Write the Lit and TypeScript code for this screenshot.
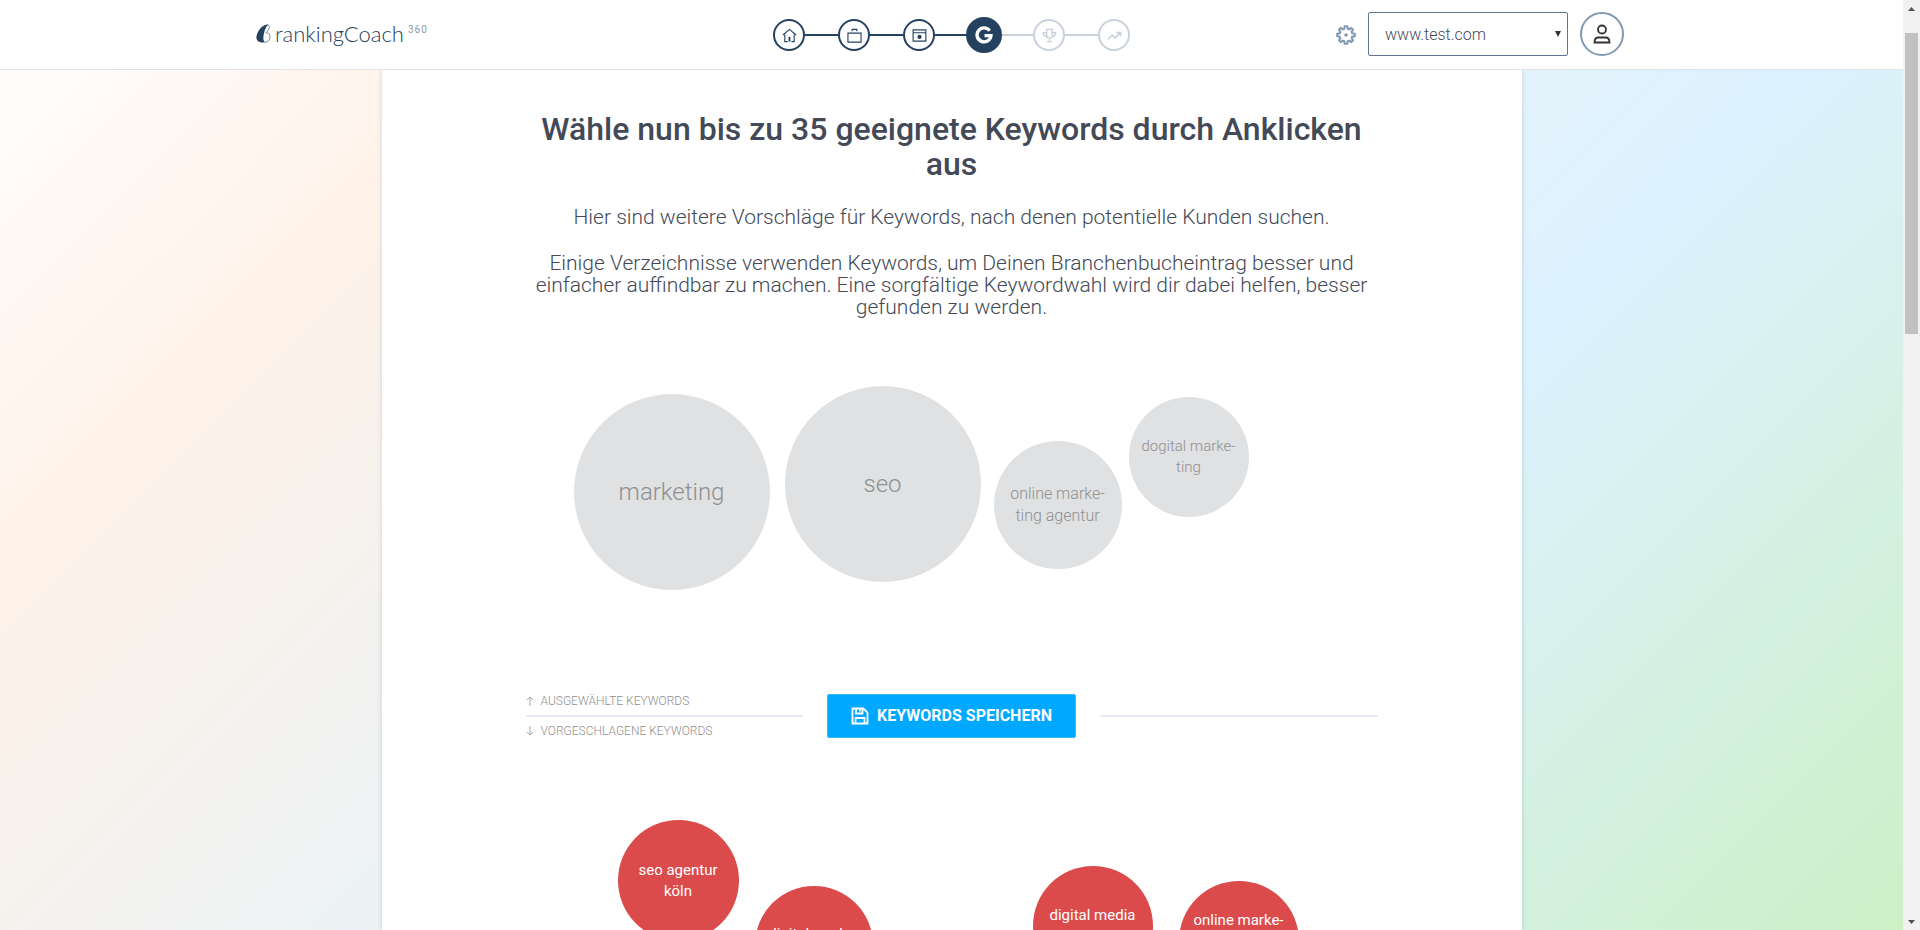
import { LitElement, html, css, svg } from "lit";
import { customElement } from "lit/decorators.js";
import { classMap } from "lit/directives/class-map.js";
import { styleMap } from "lit/directives/style-map.js";

interface Bubble {
  lines: string[];
  x: number;
  y: number;
  size: number;
}

const SELECTED: Bubble[] = [
  { lines: ["marketing"], x: 48, y: 52, size: 196 },
  { lines: ["seo"], x: 259, y: 44, size: 196 },
  { lines: ["online marke-", "ting agentur"], x: 468, y: 99, size: 128 },
  { lines: ["dogital marke-", "ting"], x: 603, y: 55, size: 120 },
];

const SUGGESTED: Bubble[] = [
  { lines: ["seo agentur", "köln"], x: 92, y: 82, size: 121 },
  { lines: ["digital marke-", "ting"], x: 229, y: 148, size: 118 },
  { lines: ["digital media", "agentur"], x: 507, y: 128, size: 120 },
  { lines: ["online marke-", "ting agentur", "köln"], x: 653, y: 143, size: 120 },
];

const ICONS = {
  home: svg`<path d="M1 7.500 8 1.500l7 6M3 7v7.500h3M13 7v7.500h-3"/><path d="M7 9.500h2v5H7z" fill="currentColor" stroke="none"/>`,
  briefcase: svg`<path d="M1 5.500h14v9.500H1zM5.500 3.500V1.500h5v2"/>`,
  browser: svg`<path d="M1.200 2h13.600v12H1.200zM1.200 5h13.600"/><circle cx="8" cy="9.500" r="2.200" fill="currentColor" stroke="none"/>`,
  google: svg`<path d="M13 4.200A6.200 6.200 0 1 0 14.200 8.500H8.500" stroke-width="3"/>`,
  trophy: svg`<path stroke-width="1.500" d="M5 1.500h6v7.200L9.500 10.500h-3L5 8.700zM5 5H1.500V7L3.500 9H5M11 5h3.500V7L12.500 9H11M8 10.500v3.500M5 14.500h6"/>`,
  chart: svg`<path stroke-width="1.700" d="M1 12 5.500 7.500l3 3L14 5M10 4.800H14.500v4"/>`,
};

const STEPS = [
  { icon: "home", label: "Start", state: "done" },
  { icon: "briefcase", label: "Unternehmen", state: "done" },
  { icon: "browser", label: "Website", state: "done" },
  { icon: "google", label: "Keywords", state: "active" },
  { icon: "trophy", label: "Wettbewerb", state: "todo" },
  { icon: "chart", label: "Ranking", state: "todo" },
] as const;

@customElement("rc-header")
class RcHeader extends LitElement {
  static styles = css`
    :host { display: block; background: #fff; border-bottom: 1px solid #dfe4ea; }
    .bar {
      box-sizing: border-box; height: 69px; max-width: 1391px; margin: 0 auto; padding-right: 23px;
      display: grid; grid-template-columns: 1fr auto 1fr; align-items: center;
    }
    .logo { display: flex; align-items: center; gap: 4px; color: #24425f; text-decoration: none; padding-bottom: 2px; }
    .drop { width: 15px; height: 19px; display: block; }
    .name { font: 300 22px/28px Lato, "Open Sans", sans-serif; }
    .sup { font: 400 10px/12px Roboto, sans-serif; letter-spacing: 1px; color: #8d99a8; align-self: flex-start; margin-top: 4px; }
    .steps { list-style: none; display: flex; align-items: center; margin: 0 -23px 0 0; padding: 1px 0 0; height: 38px; }
    .step { display: flex; align-items: center; }
    .step + .step::before { content: ""; width: 33px; height: 2px; background: #24425f; }
    .dot {
      box-sizing: border-box; width: 32px; height: 32px; padding: 0; border: 2px solid #24425f; border-radius: 50%;
      background: #fff; color: #24425f; display: grid; place-items: center;
    }
    .step.todo + .step::before, .step.active + .step::before { background: #c8d1dc; }
    .todo .dot { border-color: #c8d1dc; color: #c8d1dc; }
    .active .dot { position: relative; z-index: 1; width: 36px; height: 36px; margin: 0 -2px; background: #24425f; color: #fff; }
    .glyph { width: 15px; height: 15px; fill: none; stroke: currentColor; stroke-width: 1.200; }
    .active .glyph { width: 18px; height: 18px; }
    .tools { display: flex; align-items: center; justify-content: flex-end; gap: 12px; padding-bottom: 2px; }
    .icon { border: 0; background: none; padding: 2px 0 0; color: #8099b3; display: block; }
    .gear { width: 20px; height: 20px; display: block; fill: none; stroke: currentColor; stroke-width: 2; }
    .pick { position: relative; display: block; }
    .site {
      box-sizing: border-box; width: 200px; height: 44px; padding: 2px 16px 0; appearance: none; border: 1px solid #5f7892;
      border-radius: 2px; background: #fff; font: 300 16px/20px Roboto, sans-serif; color: #434956; display: block;
    }
    .caret { position: absolute; right: 7px; top: 19px; width: 6px; height: 6px; fill: #333; }
    .user {
      box-sizing: border-box; width: 44px; height: 44px; padding: 0; border: 2px solid #8099b3; border-radius: 50%;
      background: #fff; display: grid; place-items: center;
    }
    .person { width: 18px; height: 20px; fill: none; stroke: #333; stroke-width: 1.800; }
  `;

  render() {
    return html`
      <div class="bar">
        <a class="logo" href="#" aria-label="rankingCoach 360">
          <svg class="drop" viewBox="0 0 15 19">
            <path fill="#24425f" d="M11 .5C5.500 1 1 8 .4 13c-.2 3.500 2.400 5.400 6 5.500h3C7.500 17.500 7 15 7.500 12 8 8 9.500 3.500 12 .600z"/>
            <path fill="none" stroke="#24425f" stroke-width=".6" d="M11 .8c2 0 2.800 1 2 3.500-.5 2-2.500 3.500-3.500 5M10.500 9c2.500-.3 3.800 1.500 3.500 4.500-.3 3-2.500 4.800-5 4.800"/>
          </svg>
          <span class="name">rankingCoach</span><span class="sup">360</span>
        </a>
        <ol class="steps">
          ${STEPS.map(
            (s) => html`<li class=${classMap({ step: true, [s.state]: true })}>
              <button class="dot" aria-label=${s.label}><svg class="glyph" viewBox="0 0 16 16">${ICONS[s.icon]}</svg></button>
            </li>`
          )}
        </ol>
        <div class="tools">
          <button class="icon" aria-label="Einstellungen">
            <svg class="gear" viewBox="0 0 20 20">
              <path stroke-linejoin="round" d="M8.700 1.200h2.600l.4 2.600 1.500.6 2.100-1.500 1.800 1.800-1.500 2.100.6 1.500 2.600.4v2.600l-2.600.4-.6 1.500 1.500 2.100-1.800 1.800-2.100-1.500-1.500.6-.4 2.600H8.700l-.4-2.600-1.500-.6-2.100 1.500-1.800-1.800 1.500-2.100-.6-1.500-2.600-.4V8.700l2.600-.4.6-1.500-1.500-2.100 1.800-1.800 2.100 1.500 1.500-.6z"/>
              <circle cx="10" cy="10" r="1.800" fill="currentColor" stroke="none"/>
            </svg>
          </button>
          <label class="pick">
            <select class="site" aria-label="Website"><option>www.test.com</option></select>
            <svg class="caret" viewBox="0 0 6 6"><path d="M0 0h6L3 6z"/></svg>
          </label>
          <button class="user" aria-label="Profil">
            <svg class="person" viewBox="0 0 18 20"><circle cx="9" cy="5.500" r="4"/><path d="M1.500 18.500c0-3.500 1.500-5 4-5h7c2.500 0 4 1.500 4 5z"/></svg>
          </button>
        </div>
      </div>
    `;
  }
}

@customElement("keyword-cloud")
class KeywordCloud extends LitElement {
  static properties = { items: { attribute: false }, tone: { type: String } };
  declare items: Bubble[];
  declare tone: string;

  static styles = css`
    :host { display: block; }
    .cloud { position: relative; height: 100%; }
    .bubble {
      position: absolute; box-sizing: border-box; padding: 0; border: 0; border-radius: 50%;
      font: 300 15px/21px Roboto, sans-serif; text-align: center;
    }
    .line { display: block; white-space: nowrap; }
    .grey { background: #dfe1e3; color: #909090; }
    .red { background: #db4b4b; color: #fff; font-weight: 400; }
    .medium { font-size: 16px; line-height: 22px; }
    .large { font-size: 24px; line-height: 28px; }
  `;

  render() {
    return html`<div class="cloud">
      ${this.items.map(
        (b) => html`<button
          class=${classMap({ bubble: true, [this.tone]: true, medium: b.size > 125 && b.size <= 150, large: b.size > 150 })}
          style=${styleMap({ left: `${b.x}px`, top: `${b.y}px`, width: `${b.size}px`, height: `${b.size}px` })}
        >${b.lines.map((l) => html`<span class="line">${l}</span>`)}</button>`
      )}
    </div>`;
  }
}

@customElement("app-root")
class AppRoot extends LitElement {
  static styles = css`
    :host { display: flex; height: 100vh; overflow: hidden; font-family: Roboto, sans-serif; color: #434956; }
    .page {
      flex: 1; min-width: 0; display: flex; flex-direction: column; overflow: hidden;
      background: linear-gradient(135deg, #fff 0%, #fff2e8 20%, #dcf2ff 66%, #cdf0c6 100%);
    }
    .sheet {
      box-sizing: border-box; flex: 1; min-height: 0; width: 100%; max-width: 1140px; margin: 0 auto; padding: 42px 144px 0;
      background: #fff; box-shadow: 0 0 5px rgba(60, 80, 100, 0.2); overflow: hidden;
    }
    rc-header { position: relative; z-index: 1; }
    .intro { padding: 0 8px; text-align: center; }
    .title { margin: 0; font-weight: 500; font-size: 32px; line-height: 35px; }
    .lead { margin: 24px 0; font-weight: 300; font-size: 21px; line-height: 22px; }
    .selected { height: 352px; }
    .suggested { height: 300px; }
    .divider { display: flex; align-items: center; gap: 24px; height: 44px; }
    .rule { flex: 1; height: 2px; background: #ebebf3; }
    .legend { flex: 1; display: flex; flex-direction: column; }
    .legend .rule { flex: none; }
    .note { display: flex; align-items: center; gap: 7px; height: 28px; font-size: 12px; line-height: 16px; font-weight: 300; color: #8f8f8f; }
    .arrow { width: 8px; height: 10px; fill: none; stroke: #a8a8a8; stroke-width: 1; }
    .save {
      box-sizing: border-box; height: 44px; width: 249px; padding: 0; border: 1px solid #35b8ff; border-radius: 2px;
      background: #00a8ff; color: #fff; font: 700 16px/20px Roboto, sans-serif;
      display: flex; align-items: center; justify-content: center; gap: 8px;
    }
    .disk { width: 18px; height: 18px; fill: none; stroke: #fff; stroke-width: 1.800; }
    .scrollbar { width: 17px; background: #f1f1f1; display: flex; flex-direction: column; align-items: center; }
    .thumb { width: 13px; height: 32.400%; background: #c1c1c1; margin-top: 16px; }
    .tip { width: 7px; height: 4px; margin: 7px 0 6px; fill: #505050; }
    .tip.end { margin-top: auto; }
  `;

  render() {
    return html`
      <div class="page">
        <rc-header></rc-header>
        <main class="sheet">
          <div class="intro">
            <h1 class="title">Wähle nun bis zu 35 geeignete Keywords durch Anklicken aus</h1>
            <p class="lead">Hier sind weitere Vorschläge für Keywords, nach denen potentielle Kunden suchen.</p>
            <p class="lead">Einige Verzeichnisse verwenden Keywords, um Deinen Branchenbucheintrag besser und einfacher auffindbar zu machen. Eine sorgfältige Keywordwahl wird dir dabei helfen, besser gefunden zu werden.</p>
          </div>
          <keyword-cloud class="selected" tone="grey" .items=${SELECTED}></keyword-cloud>
          <div class="divider">
            <div class="legend">
              <span class="note"><svg class="arrow" viewBox="0 0 8 10"><path d="M4 10V1M1 4l3-3 3 3"/></svg>AUSGEWÄHLTE KEYWORDS</span>
              <div class="rule"></div>
              <span class="note"><svg class="arrow" viewBox="0 0 8 10"><path d="M4 0v9M1 6l3 3 3-3"/></svg>VORGESCHLAGENE KEYWORDS</span>
            </div>
            <button class="save">
              <svg class="disk" viewBox="0 0 18 18"><path d="M1.500 1.500h11l4 4v11h-15zM5 1.500v5h6.500v-5M4.500 16.500V11h9v5.500M9 2v2.500"/></svg>
              KEYWORDS SPEICHERN
            </button>
            <div class="rule"></div>
          </div>
          <keyword-cloud class="suggested" tone="red" .items=${SUGGESTED}></keyword-cloud>
        </main>
      </div>
      <div class="scrollbar" aria-hidden="true">
        <svg class="tip" viewBox="0 0 7 4"><path d="M0 4h7L3.500 0z"/></svg>
        <div class="thumb"></div>
        <svg class="tip end" viewBox="0 0 7 4"><path d="M0 0h7L3.500 4z"/></svg>
      </div>
    `;
  }
}
